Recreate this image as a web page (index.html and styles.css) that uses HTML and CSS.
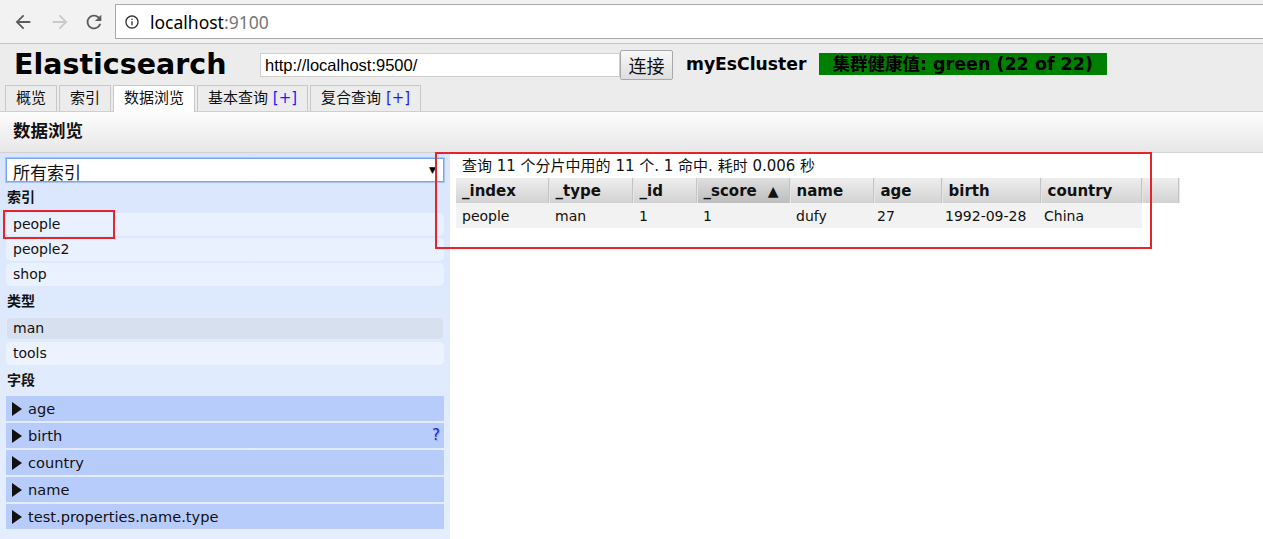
FILE: index.html
```html
<!DOCTYPE html>
<html lang="zh">
<head>
<meta charset="utf-8">
<title>elasticsearch-head</title>
<link rel="stylesheet" href="styles.css">
</head>
<body>
<div class="chrome">
  <div class="nav">
    <svg class="nav-icon back" viewBox="0 0 24 24"><path d="M20 11H7.83l5.59-5.59L12 4l-8 8 8 8 1.41-1.41L7.83 13H20v-2z"/></svg>
    <svg class="nav-icon fwd" viewBox="0 0 24 24"><path d="M4 11h12.17l-5.59-5.59L12 4l8 8-8 8-1.41-1.41L16.17 13H4v-2z"/></svg>
    <svg class="nav-icon reload" viewBox="0 0 24 24"><path d="M17.65 6.35A7.958 7.958 0 0 0 12 4c-4.42 0-7.990 3.58-7.99 8s3.57 8 7.99 8c3.73 0 6.84-2.55 7.73-6h-2.08A5.99 5.99 0 0 1 12 18c-3.31 0-6-2.690-6-6s2.69-6 6-6c1.66 0 3.14.69 4.22 1.78L13 11h7V4l-2.35 2.35z"/></svg>
  </div>
  <div class="omnibox">
    <svg class="info-icon" viewBox="0 0 24 24"><path d="M11 7h2v2h-2zm0 4h2v6h-2zm1-9C6.48 2 2 6.48 2 12s4.48 10 10 10 10-4.48 10-10S17.52 2 12 2zm0 18c-4.41 0-8-3.59-8-8s3.59-8 8-8 8 3.59 8 8-3.59 8-8 8z"/></svg>
    <span class="url-host">localhost</span><span class="url-port">:9100</span>
  </div>
</div>

<div class="header">
  <div class="toprow">
    <h1 class="brand">Elasticsearch</h1>
    <input class="conn-input" type="text" value="http://localhost:9500/">
    <button class="conn-btn">连接</button>
    <span class="cluster-name">myEsCluster</span>
    <span class="health">集群健康值: green (22 of 22)</span>
  </div>
  <div class="tabs">
    <div class="tab">概览</div>
    <div class="tab">索引</div>
    <div class="tab active">数据浏览</div>
    <div class="tab">基本查询 <span class="plus">[+]</span></div>
    <div class="tab">复合查询 <span class="plus">[+]</span></div>
  </div>
</div>

<div class="section-title">数据浏览</div>

<div class="main">
  <aside class="sidebar">
    <div class="select">
      <span class="select-text">所有索引</span>
      <span class="select-arrow">▼</span>
    </div>
    <div class="side-heading">索引</div>
    <div class="item">people</div>
    <div class="item">people2</div>
    <div class="item">shop</div>
    <div class="side-heading">类型</div>
    <div class="item selected">man</div>
    <div class="item">tools</div>
    <div class="side-heading">字段</div>
    <div class="field"><span class="tri"></span>age</div>
    <div class="field"><span class="tri"></span>birth<span class="help">?</span></div>
    <div class="field"><span class="tri"></span>country</div>
    <div class="field"><span class="tri"></span>name</div>
    <div class="field"><span class="tri"></span>test.properties.name.type</div>
  </aside>

  <section class="results">
    <div class="summary">查询 11 个分片中用的 11 个. 1 命中. 耗时 0.006 秒</div>
    <table class="grid">
      <colgroup>
        <col class="c1"><col class="c2"><col class="c3"><col class="c4"><col class="c5"><col class="c6"><col class="c7"><col class="c8"><col class="c9">
      </colgroup>
      <thead>
        <tr>
          <th>_index</th><th>_type</th><th>_id</th><th class="sorted">_score<span class="sort-arrow">▲</span></th><th>name</th><th>age</th><th>birth</th><th>country</th><th class="filler"></th>
        </tr>
      </thead>
      <tbody>
        <tr>
          <td>people</td><td>man</td><td>1</td><td>1</td><td>dufy</td><td class="tight">27</td><td class="tight">1992-09-28</td><td class="tight">China</td><td class="blank"></td>
        </tr>
      </tbody>
    </table>
  </section>
</div>

<div class="mark mark-people"></div>
<div class="mark mark-results"></div>
</body>
</html>
```
FILE: styles.css
```css
html, body {
  margin: 0;
  padding: 0;
}
body {
  width: 1263px;
  height: 539px;
  overflow: hidden;
  font-family: "DejaVu Sans", "Noto Sans CJK SC", sans-serif;
  font-size: 14px;
  color: #111;
  background: #fff;
  display: flex;
  flex-direction: column;
  position: relative;
}

/* browser chrome */
.chrome {
  height: 43px;
  background: #f2f2f2;
  border-bottom: 1px solid #c4c4c4;
  display: flex;
  align-items: flex-start;
  flex-shrink: 0;
}
.nav {
  width: 115px;
  height: 43px;
  display: flex;
  align-items: center;
}
.nav-icon {
  width: 22px;
  height: 22px;
}
.back { margin-left: 12px; fill: #5c5c5c; }
.fwd { margin-left: 15px; fill: #c9c9c9; }
.reload { margin-left: 12px; fill: #5c5c5c; }
.omnibox {
  margin-top: 4px;
  flex: 1;
  height: 33px;
  background: #fff;
  border: 1px solid #a9a9a9;
  border-right: none;
  display: flex;
  align-items: center;
  font-family: "Noto Sans", "DejaVu Sans", sans-serif;
  font-size: 17.5px;
}
.info-icon {
  width: 16px;
  height: 16px;
  fill: #333;
  margin-left: 8px;
  margin-right: 10px;
}
.url-host { color: #000; }
.url-port { color: #777; }

/* header */
.header {
  background: #ececec;
  flex-shrink: 0;
}
.toprow {
  height: 42px;
  display: flex;
  align-items: center;
  padding-left: 14px;
}
.brand {
  margin: 0;
  width: 246px;
  font-size: 28.5px;
  font-weight: bold;
  line-height: 32px;
  color: #000;
}
.conn-input {
  box-sizing: border-box;
  width: 360px;
  height: 24px;
  margin: 0;
  padding: 0 4px;
  border: 1px solid #cfcfcf;
  background: #fff;
  font-family: "Liberation Sans", Arial, sans-serif;
  font-size: 16.5px;
  color: #000;
}
.conn-btn {
  box-sizing: border-box;
  width: 53px;
  height: 30px;
  margin: 0 0 1px 0;
  padding: 0;
  border: 1px solid #a8a8a8;
  border-radius: 2px;
  background: linear-gradient(#f7f7f7, #dedede);
  font-family: "Noto Sans CJK SC", sans-serif;
  font-size: 18px;
  color: #111;
}
.cluster-name {
  margin-left: 13px;
  font-weight: bold;
  font-size: 17.2px;
  color: #000;
  margin-bottom: 2px;
}
.health {
  margin-left: 13px;
  margin-bottom: 2px;
  box-sizing: border-box;
  width: 288px;
  height: 22px;
  line-height: 22px;
  padding-left: 13px;
  background: #008000;
  color: #000;
  font-weight: bold;
  font-size: 17.5px;
  white-space: nowrap;
  overflow: hidden;
}
.tabs {
  display: flex;
  align-items: flex-end;
  gap: 2px;
  padding-left: 5px;
  height: 25px;
  border-bottom: 1px solid #cfcfcf;
}
.tab {
  height: 25px;
  line-height: 25px;
  padding: 0 10px;
  border: 1px solid #c8c8c8;
  border-bottom: none;
  background: #ececec;
  font-size: 15px;
  color: #111;
  white-space: nowrap;
}
.tab.active {
  background: #fff;
  height: 26px;
  margin-bottom: -1px;
}
.plus { color: #1a1aff; }

.section-title {
  flex-shrink: 0;
  height: 40px;
  line-height: 38px;
  padding-left: 13px;
  font-weight: bold;
  font-size: 17.5px;
  color: #111;
  background: linear-gradient(#fdfdfd, #e7e7e7);
  border-bottom: 1px solid #d2d2d2;
}

/* main */
.main {
  flex: 1;
  display: flex;
  min-height: 0;
}
.sidebar {
  width: 450px;
  box-sizing: border-box;
  padding: 5px 6px 0 6px;
  background: linear-gradient(#d9e6fd, #e5eefe);
  flex-shrink: 0;
}
.select {
  box-sizing: border-box;
  height: 24px;
  margin-bottom: 2px;
  background: #fff;
  border: 1px solid #78a5f0;
  box-shadow: 0 0 0 1px #a8c4f5;
  display: flex;
  align-items: center;
  justify-content: space-between;
}
.select-text {
  padding-left: 6px;
  font-size: 17px;
  line-height: 22px;
  padding-top: 3px;
  font-family: "Noto Sans CJK SC", sans-serif;
}
.select-arrow {
  font-size: 9px;
  margin-right: 7px;
  color: #000;
}
.side-heading {
  padding-top: 3px;
  line-height: 20px;
  margin-bottom: 6px;
  font-weight: bold;
  font-size: 14px;
  padding-left: 1px;
}
.item {
  box-sizing: border-box;
  height: 23px;
  line-height: 23px;
  margin-bottom: 2px;
  padding-left: 7px;
  border-radius: 5px;
  background: rgba(255, 255, 255, 0.4);
  font-size: 14px;
}
.item.selected {
  background: #d7e0ee;
  box-shadow: inset 0 0 0 1px #e4ebf6;
}
.field {
  box-sizing: border-box;
  height: 25px;
  line-height: 25px;
  margin-bottom: 2px;
  padding-left: 6px;
  background: #b8ccfb;
  font-size: 14.6px;
  display: flex;
  align-items: center;
}
.tri {
  width: 0;
  height: 0;
  border-top: 7px solid transparent;
  border-bottom: 7px solid transparent;
  border-left: 10px solid #111;
  margin-right: 6px;
}
.help {
  margin-left: auto;
  margin-right: 4px;
  color: #2020e0;
  font-size: 15px;
  text-shadow: 1px 1px 1px #8a9ad8;
}

.results {
  flex: 1;
  padding-left: 6px;
}
.summary {
  padding: 3px 0 0 6px;
  line-height: 20px;
  font-size: 15px;
  margin-bottom: 2px;
}
.grid {
  border-collapse: collapse;
  table-layout: fixed;
  width: 723px;
}
.c1 { width: 93px; }
.c2 { width: 84px; }
.c3 { width: 64px; }
.c4 { width: 93px; }
.c5 { width: 84px; }
.c6 { width: 68px; }
.c7 { width: 99px; }
.c8 { width: 101px; }
.c9 { width: 37px; }
.grid th {
  height: 25px;
  padding: 0 6px;
  text-align: left;
  font-size: 15px;
  font-weight: bold;
  color: #111;
  white-space: nowrap;
  background: linear-gradient(#eeeeee, #d2d2d2);
  border-right: 1px solid #e6e6e6;
  box-shadow: inset -1px 0 0 #c4c4c4;
}
.grid th.sorted {
  background: linear-gradient(#dedede, #bdbdbd);
}
.sort-arrow {
  margin-left: 11px;
  font-size: 14px;
}
.grid td {
  height: 25px;
  padding: 0 6px;
  font-size: 14px;
  white-space: nowrap;
  background: #f2f2f2;
}
.grid td.tight { padding-left: 3px; }
.grid td.blank { background: transparent; }

/* annotation marks */
.mark {
  position: absolute;
  border: 2px solid #e6242c;
  box-sizing: border-box;
}
.mark-people {
  left: 3px;
  top: 210px;
  width: 112px;
  height: 29px;
}
.mark-results {
  left: 435px;
  top: 152px;
  width: 717px;
  height: 97px;
}
```
